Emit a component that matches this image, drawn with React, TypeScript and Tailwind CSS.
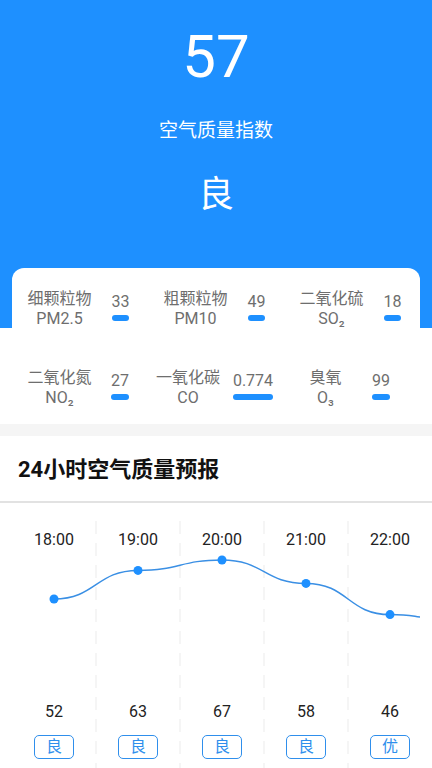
import React from "react";

const BLUE = "#1E90FF";

type Pollutant = {
  name: string;
  code: string;
  value: string;
  labelCls: string;
  valueCls: string;
};

const pollutants: Pollutant[] = [
  { name: "细颗粒物", code: "PM2.5", value: "33", labelCls: "w-[95px]", valueCls: "w-[27px]" },
  { name: "粗颗粒物", code: "PM10", value: "49", labelCls: "w-[95px]", valueCls: "w-[27px]" },
  { name: "二氧化硫", code: "SO₂", value: "18", labelCls: "w-[95px]", valueCls: "w-[27px]" },
  { name: "二氧化氮", code: "NO₂", value: "27", labelCls: "w-[95px]", valueCls: "w-[26px]" },
  { name: "一氧化碳", code: "CO", value: "0.774", labelCls: "w-[80px]", valueCls: "w-[50px]" },
  { name: "臭氧", code: "O₃", value: "99", labelCls: "w-[83px]", valueCls: "w-[28px]" },
];

const hours = [
  { time: "18:00", aqi: 52, level: "良" },
  { time: "19:00", aqi: 63, level: "良" },
  { time: "20:00", aqi: 67, level: "良" },
  { time: "21:00", aqi: 58, level: "良" },
  { time: "22:00", aqi: 46, level: "优" },
];

// chart coords are relative to the top of the forecast area
const px = (i: number) => 54 + i * 84;
const py = (v: number) => 231.2 - 2.6 * v;

function curvePath() {
  const pts = [...hours.map((h, i) => [px(i), py(h.aqi)]), [px(5), py(42)]];
  let d = `M${pts[0][0]},${pts[0][1]}`;
  for (let i = 1; i < pts.length; i++) {
    const [x0, y0] = pts[i - 1];
    const [x1, y1] = pts[i];
    const mx = (x0 + x1) / 2;
    d += ` C${mx},${y0} ${mx},${y1} ${x1},${y1}`;
  }
  return d;
}

function PollutantCell({ p }: { p: Pollutant }) {
  return (
    <div className="flex items-start">
      <div className={`${p.labelCls} flex flex-col items-center text-[16px] leading-[20px] text-[#6e6e6e]`}>
        <span>{p.name}</span>
        <span>{p.code}</span>
      </div>
      <div className={`${p.valueCls} mt-[3px] flex flex-col items-center`}>
        <div className="flex flex-col w-fit">
          <span className="text-[16px] leading-[20px] text-[#6e6e6e] whitespace-nowrap">{p.value}</span>
          <span className="mt-[3px] h-[6px] w-full rounded-full bg-[#1E90FF]" />
        </div>
      </div>
    </div>
  );
}

export default function App() {
  return (
    <div
      className="w-[432px] h-[768px] overflow-hidden bg-white"
      style={{ fontFamily: 'Roboto, "Noto Sans CJK SC", sans-serif' }}
    >
      {/* header */}
      <div className="h-[328px] bg-[#1E90FF] flex flex-col items-center pt-[25px] text-white">
        <div className="text-[60px] leading-[64px]">57</div>
        <div className="mt-[29px] text-[19px] leading-[26px]">空气质量指数</div>
        <div className="mt-[29px] text-[36px] leading-[44px]">良</div>
      </div>

      {/* pollutant card */}
      <div className="-mt-[60px] mx-[12px] rounded-[12px] bg-white pt-[21px] pb-[16px]">
        <div className="grid grid-cols-3 gap-y-[39px]">
          {pollutants.map((p) => (
            <PollutantCell key={p.name} p={p} />
          ))}
        </div>
      </div>

      <div className="h-[12px] bg-[#f5f5f5]" />

      {/* forecast title */}
      <div className="h-[65px] flex items-center pl-[18px] pt-[2px]">
        <h2 className="text-[22px] font-bold text-[#111]">24小时空气质量预报</h2>
      </div>
      <div className="h-[2px] bg-[#e2e2e2]" />

      {/* forecast chart */}
      <div className="relative h-[265px]">
        <svg className="absolute inset-0" width="432" height="265">
          {[96, 180, 264, 348].map((x) => (
            <line
              key={x}
              x1={x}
              y1={18}
              x2={x}
              y2={265}
              stroke="#efefef"
              strokeWidth="1.2"
              strokeDasharray="13 9"
            />
          ))}
          <clipPath id="clip">
            <rect x="0" y="0" width="420" height="265" />
          </clipPath>
          <path d={curvePath()} fill="none" stroke="#3a8fe4" strokeWidth="1.5" clipPath="url(#clip)" />
          {hours.map((h, i) => (
            <circle key={h.time} cx={px(i)} cy={py(h.aqi)} r="4.5" fill={BLUE} />
          ))}
        </svg>

        <div className="relative pl-[12px] pt-[27px] flex">
          {hours.map((h) => (
            <div key={h.time} className="w-[84px] flex flex-col items-center text-[16px] leading-[20px] text-[#222]">
              <span>{h.time}</span>
              <span className="mt-[152px]">{h.aqi}</span>
              <span className="mt-[13px] w-[40px] h-[24px] rounded-[5px] border-[1.5px] border-[#2f8fec] flex items-center justify-center text-[#2f8fec] text-[16px] leading-none">
                {h.level}
              </span>
            </div>
          ))}
        </div>
      </div>
    </div>
  );
}
